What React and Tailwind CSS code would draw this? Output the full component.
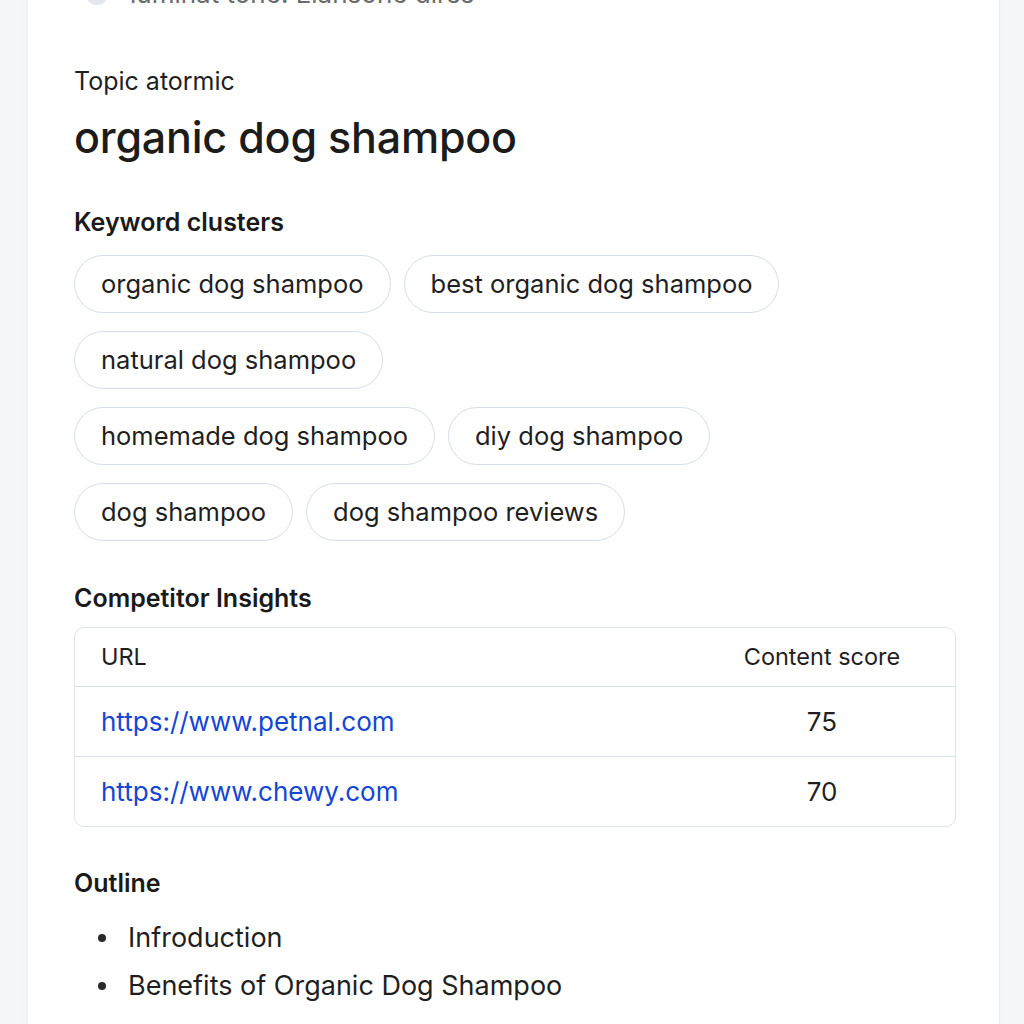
import React from "react";

const rows = [
  ["organic dog shampoo", "best organic dog shampoo"],
  ["natural dog shampoo"],
  ["homemade dog shampoo", "diy dog shampoo"],
  ["dog shampoo", "dog shampoo reviews"],
];

function Chip({ children }) {
  return (
    <div className="h-[58px] px-[26px] flex items-center rounded-full border border-[#d6dee6] bg-white text-[25.5px] text-[#1f1f1f] whitespace-nowrap">
      {children}
    </div>
  );
}

export default function App() {
  return (
    <div className="h-[1024px] overflow-hidden bg-[#f6f7f9]" style={{ fontFamily: "Inter, 'Noto Sans', sans-serif" }}>
      <div className="ml-[27px] w-[973px] h-[1100px] bg-white border-x border-[#eceef2] shadow-[0_0_6px_rgba(0,0,0,0.04)] px-[46px]">
        <div className="-mt-[21px] flex items-center gap-[22px] h-[30px] pl-[12px] text-[26px] leading-[30px] text-[#6b6b6b]">
          <div className="w-[22px] h-[22px] rounded-full bg-[#e3e6ea]" />
          <span>luminat tone: Elansone dirss</span>
        </div>
        <div className="mt-[57px] text-[25px] leading-[30px] text-[#1f1f1f]">Topic atormic</div>
        <h1 className="mt-[15px] text-[43px] leading-[52px] font-medium text-[#1c1c1c] tracking-[-0.2px]">organic dog shampoo</h1>
        <h2 className="mt-[44px] text-[25px] leading-[30px] font-semibold text-[#1a1a1a]">Keyword clusters</h2>
        <div className="mt-[18px] flex flex-col gap-[18px]">
          {rows.map((r, i) => (
            <div key={i} className="flex gap-[13px]">
              {r.map((c) => (
                <Chip key={c}>{c}</Chip>
              ))}
            </div>
          ))}
        </div>
        <h2 className="mt-[42px] text-[25px] leading-[30px] font-semibold text-[#1a1a1a]">Competitor Insights</h2>
        <div className="mt-[14px] w-[882px] border border-[#dfe5eb] rounded-[10px] overflow-hidden">
          <div className="h-[59px] flex items-center justify-between pl-[26px] text-[23.5px] text-[#1f1f1f] border-b border-[#d9e1e8]">
            <span>URL</span>
            <span className="w-[180px] mr-[43px] text-center whitespace-nowrap">Content score</span>
          </div>
          {[
            ["https://www.petnal.com", "75", "h-[70px] border-b border-[#d9e1e8]"],
            ["https://www.chewy.com", "70", "h-[69px]"],
          ].map(([u, s, cls]) => (
            <div key={u} className={"flex items-center justify-between pl-[26px] text-[26px] " + cls}>
              <span className="text-[#1446d6]">{u}</span>
              <span className="w-[180px] mr-[43px] text-center text-[#1f1f1f]">{s}</span>
            </div>
          ))}
        </div>
        <h2 className="mt-[41px] text-[25px] leading-[30px] font-semibold text-[#1a1a1a]">Outline</h2>
        <ul className="mt-[25px] flex flex-col gap-[18px] text-[27px] leading-[30px] text-[#1f1f1f]">
          {["Infroduction", "Benefits of Organic Dog Shampoo"].map((t) => (
            <li key={t} className="flex items-center">
              <span className="w-[8px] h-[8px] rounded-full bg-[#2a2a2a] ml-[24px] mr-[22px]" />
              {t}
            </li>
          ))}
        </ul>
      </div>
    </div>
  );
}
